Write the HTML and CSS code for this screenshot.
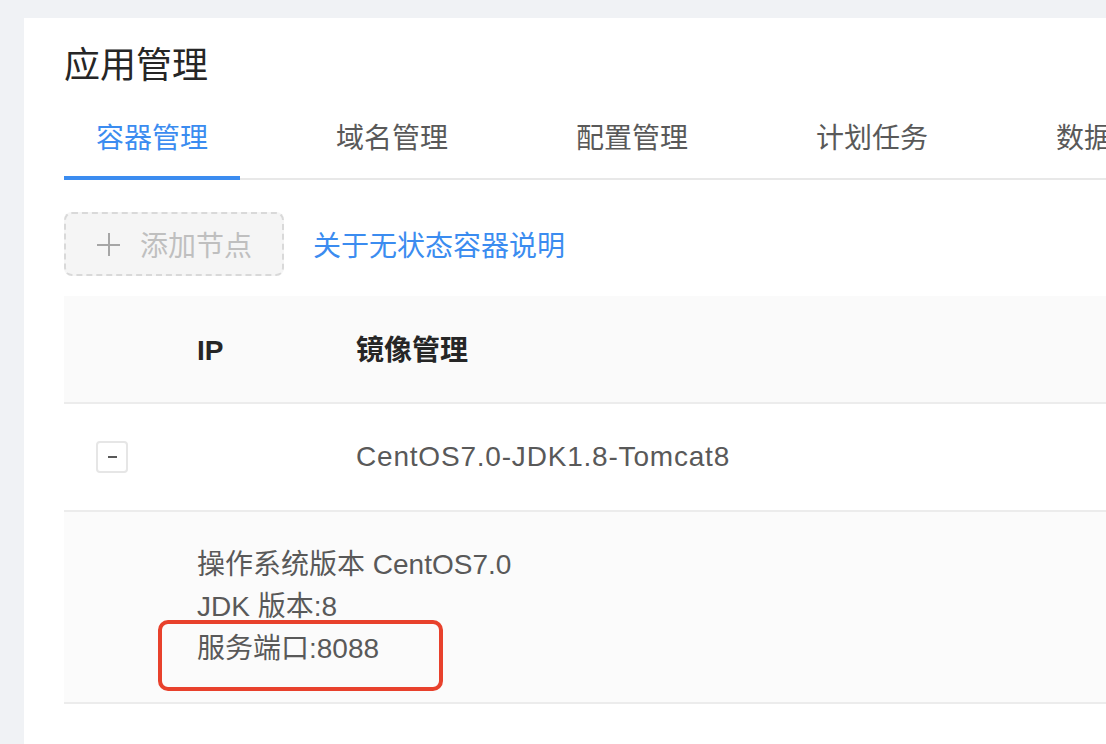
FILE: index.html
```html
<!DOCTYPE html>
<html lang="zh-CN">
<head>
    <meta charset="UTF-8">
    <meta name="viewport" content="width=device-width, initial-scale=1.0">
    <title>应用管理</title>
    <link rel="stylesheet" href="styles.css">
</head>
<body>
    <div class="card">
        <h1 class="page-title">应用管理</h1>

        <div class="tabs">
            <div class="tab active">容器管理</div>
            <div class="tab">域名管理</div>
            <div class="tab">配置管理</div>
            <div class="tab">计划任务</div>
            <div class="tab">数据</div>
        </div>

        <div class="toolbar">
            <button class="add-btn" disabled>
                <span class="plus"></span>
                <span>添加节点</span>
            </button>
            <a class="link" href="#">关于无状态容器说明</a>
        </div>

        <table class="node-table">
            <thead>
                <tr>
                    <th class="col-expand"></th>
                    <th class="col-ip">IP</th>
                    <th>镜像管理</th>
                </tr>
            </thead>
            <tbody>
                <tr class="row">
                    <td class="col-expand"><span class="expand-btn"></span></td>
                    <td class="col-ip"></td>
                    <td class="image-name">CentOS7.0-JDK1.8-Tomcat8</td>
                </tr>
                <tr class="expanded-row">
                    <td colspan="3">
                        <div class="detail">
                            <div class="line">操作系统版本 CentOS7.0</div>
                            <div class="line">JDK 版本:8</div>
                            <div class="line"><span class="marked">服务端口:8088</span></div>
                        </div>
                    </td>
                </tr>
            </tbody>
        </table>
    </div>
</body>
</html>
```

FILE: styles.css
```css
body {
    margin: 0;
    background-color: #f0f2f5;
    font-family: "Liberation Sans", "Noto Sans CJK SC", sans-serif;
    overflow: hidden;
    height: 744px;
}

.card {
    margin: 18px 0 0 24px;
    width: 1082px;
    height: 726px;
    overflow: hidden;
    background-color: #ffffff;
    padding: 23px 0 0 40px;
    box-sizing: border-box;
}

.page-title {
    margin: 0;
    font-size: 36px;
    line-height: 50px;
    font-weight: normal;
    color: #262626;
}

.tabs {
    display: flex;
    border-bottom: 2px solid #e8e8e8;
    white-space: nowrap;
}

.tab {
    flex-shrink: 0;
    padding: 28px 32px 17px;
    margin-right: 64px;
    margin-bottom: -2px;
    font-size: 28px;
    line-height: 40px;
    color: #595959;
    border-bottom: 4px solid transparent;
}

.tab:last-child {
    margin-right: 0;
    padding-right: 0;
}

.tab.active {
    color: #3b8cf0;
    border-bottom-color: #3b8cf0;
}

.toolbar {
    display: flex;
    align-items: center;
    margin-top: 32px;
}

.add-btn {
    display: flex;
    align-items: center;
    gap: 20px;
    height: 64px;
    padding: 0 30px 0 31px;
    background-color: #f5f5f5;
    border: 2px dashed #d9d9d9;
    border-radius: 8px;
    color: #bfbfbf;
    font-family: "Liberation Sans", "Noto Sans CJK SC", sans-serif;
    font-size: 28px;
}

.plus {
    position: relative;
    width: 23px;
    height: 23px;
}

.plus::before,
.plus::after {
    content: "";
    position: absolute;
    background-color: #a6a6a6;
}

.plus::before {
    left: 0;
    right: 0;
    top: 11px;
    height: 2px;
}

.plus::after {
    top: 0;
    bottom: 0;
    left: 11px;
    width: 2px;
}

.link {
    margin-left: 29px;
    font-size: 28px;
    color: #3b8cf0;
    text-decoration: none;
}

.node-table {
    margin-top: 20px;
    width: 1100px;
    border-collapse: collapse;
    font-size: 28px;
    line-height: 42px;
    color: #595959;
}

.node-table th,
.node-table td {
    padding: 32px;
    text-align: left;
    border-bottom: 2px solid #ececec;
}

.node-table th {
    padding-top: 34px;
    padding-bottom: 30px;
    background-color: #fafafa;
    color: #262626;
    font-weight: 600;
}

.col-expand {
    width: 37px;
}

.col-ip {
    width: 95px;
}

.image-name {
    letter-spacing: 0.8px;
}

.expand-btn {
    display: block;
    position: relative;
    width: 32px;
    height: 32px;
    box-sizing: border-box;
    border: 2px solid #e6e6e6;
    border-radius: 4px;
}

.expand-btn::after {
    content: "";
    position: absolute;
    left: 10px;
    top: 13px;
    width: 9px;
    height: 2px;
    background-color: #595959;
}

.expanded-row td {
    background-color: #fbfbfb;
    padding-left: 133px;
}

.marked {
    position: relative;
}

.marked::after {
    content: "";
    position: absolute;
    left: -39px;
    top: -13px;
    width: 285px;
    height: 71px;
    box-sizing: border-box;
    border: 4px solid #e8412c;
    border-radius: 10px;
}
```
